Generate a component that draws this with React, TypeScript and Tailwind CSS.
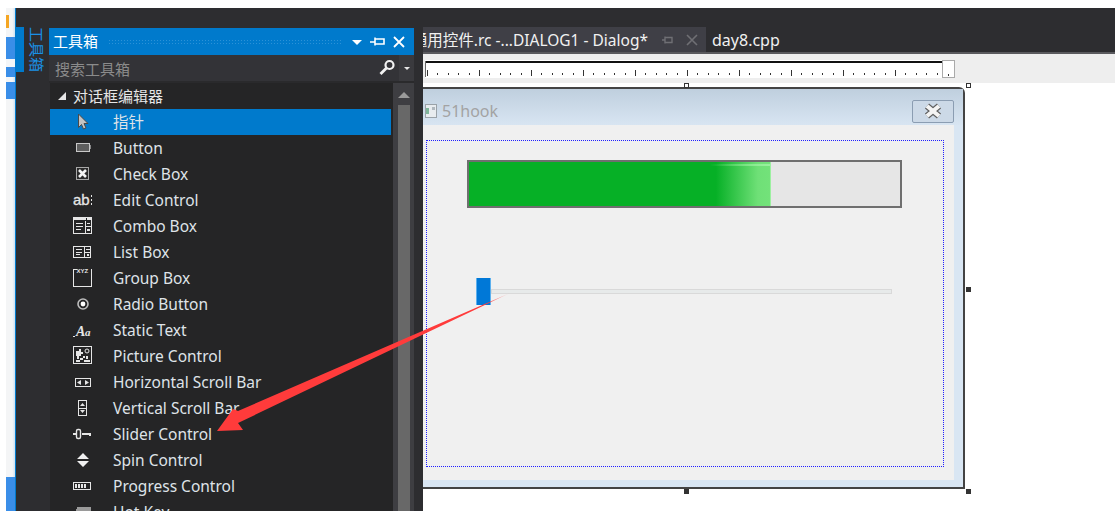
import type { ReactNode } from "react";

const FONT = "font-['Noto_Sans','Noto_Sans_CJK_SC',sans-serif]";

function Ic({ children }: { children: ReactNode }) {
  return (
    <svg width="20" height="20" viewBox="0 0 20 20" shapeRendering="crispEdges" className="shrink-0">
      {children}
    </svg>
  );
}

const W = "#e6e6e6";

const icons: Record<string, ReactNode> = {
  pointer: (
    <Ic>
      <path d="M5.5 2 L5.5 15.5 L8.5 12.5 L10.5 17 L13 16 L11 11.5 L15 11.5 Z" fill="#c4c4c4" stroke="#4a4a4a" strokeWidth="1" shapeRendering="auto" />
    </Ic>
  ),
  button: (
    <Ic>
      <rect x="3.5" y="5.5" width="13" height="8" fill="#5e5e5e" stroke="#c8c8c8" />
      <rect x="17" y="7" width="1" height="4" fill="#888" />
    </Ic>
  ),
  check: (
    <Ic>
      <rect x="3.5" y="3.5" width="12" height="12" fill="#2a2a2a" stroke="#a8a8a8" />
      <path d="M6 6 L13 13 M13 6 L6 13" stroke="#f4f4f4" strokeWidth="2.6" shapeRendering="auto" />
    </Ic>
  ),
  edit: (
    <Ic>
      <text x="0" y="15" fontSize="15" fontWeight="400" stroke={W} strokeWidth="0.3" fill={W} fontFamily="'Liberation Sans',sans-serif">ab</text>
      <rect x="18" y="5" width="1" height="2" fill={W} />
      <rect x="18" y="9" width="1" height="2" fill={W} />
      <rect x="18" y="13" width="1" height="2" fill={W} />
    </Ic>
  ),
  combo: (
    <Ic>
      <rect x="0.5" y="1.5" width="18" height="16" fill="none" stroke={W} />
      <rect x="1" y="2" width="12" height="2" fill={W} />
      <rect x="14" y="2" width="4" height="2" fill={W} />
      <rect x="3" y="7" width="7" height="1" fill={W} />
      <rect x="3" y="10" width="7" height="1" fill={W} />
      <rect x="3" y="13" width="5" height="1" fill={W} />
      <rect x="12" y="5" width="1" height="12" fill={W} />
      <rect x="13" y="10" width="5" height="1" fill={W} />
      <rect x="14" y="7" width="3" height="1" fill={W} />
      <rect x="14" y="13" width="3" height="2" fill={W} />
    </Ic>
  ),
  list: (
    <Ic>
      <rect x="0.5" y="4.5" width="17" height="11" fill="none" stroke={W} />
      <rect x="3" y="7" width="6" height="1" fill={W} />
      <rect x="3" y="10" width="6" height="1" fill={W} />
      <rect x="3" y="12" width="4" height="1" fill={W} />
      <rect x="11" y="5" width="1" height="10" fill={W} />
      <rect x="13" y="7" width="4" height="1" fill={W} />
      <rect x="12" y="10" width="5" height="1" fill={W} />
      <rect x="14" y="12" width="2" height="2" fill={W} />
    </Ic>
  ),
  group: (
    <Ic>
      <path d="M3.5 1.5 H0.5 V18.5 H18.5 V1.5 H17.5" fill="none" stroke={W} />
      <text x="3.5" y="4.5" fontSize="6" fontWeight="700" fill={W} fontFamily="'Liberation Sans',sans-serif">XYZ</text>
    </Ic>
  ),
  radio: (
    <Ic>
      <circle cx="10" cy="10" r="5" fill="none" stroke="#bdbdbd" strokeWidth="1.6" shapeRendering="auto" />
      <circle cx="10" cy="10" r="2.4" fill="#fff" shapeRendering="auto" />
    </Ic>
  ),
  stat: (
    <Ic>
      <rect x="0" y="16" width="2" height="1" fill={W} />
      <text x="3" y="16" fontSize="14" fontStyle="italic" fontWeight="700" fill={W} fontFamily="'Liberation Serif',serif">A</text>
      <text x="12" y="16" fontSize="11" fontStyle="italic" fontWeight="700" fill={W} fontFamily="'Liberation Serif',serif">a</text>
    </Ic>
  ),
  picture: (
    <Ic>
      <rect x="0.5" y="0.5" width="18" height="17" fill="none" stroke={W} />
      <path d="M3 5h3v-2h2v3h2v2h-2v2h-2v3h-2v-3h-1zM7 12h3v2h-3zM3 14h4v2h-4zM11 14h6v2h-6zM13 10h2v3h-2zM10 10h2v2h-2z" fill={W} />
      <circle cx="14" cy="5" r="2" fill="none" stroke={W} shapeRendering="auto" />
    </Ic>
  ),
  hscroll: (
    <Ic>
      <rect x="2.5" y="6.5" width="15" height="8" fill="none" stroke={W} />
      <path d="M8 8 V13 L4 10.5 Z M12 8 V13 L16 10.5 Z" fill={W} shapeRendering="auto" />
      <rect x="9" y="7" width="2" height="7" fill="#252526" />
    </Ic>
  ),
  vscroll: (
    <Ic>
      <rect x="5.5" y="2.5" width="8" height="15" fill="none" stroke={W} />
      <path d="M7 8 H12 L9.5 5 Z M7 12 H12 L9.5 15 Z" fill={W} shapeRendering="auto" />
      <rect x="6" y="10" width="7" height="1" fill={W} />
    </Ic>
  ),
  slider: (
    <Ic>
      <rect x="0" y="9" width="3" height="2" fill={W} />
      <rect x="3.5" y="5.5" width="4" height="9" rx="1.5" fill="none" stroke={W} strokeWidth="1.4" shapeRendering="auto" />
      <rect x="9" y="9" width="9" height="2" fill={W} />
      <rect x="16" y="9" width="2" height="3" fill={W} />
    </Ic>
  ),
  spin: (
    <Ic>
      <path d="M4 9 H16 L10 3 Z M4 11 H16 L10 17 Z" fill="#f0f0f0" shapeRendering="auto" />
    </Ic>
  ),
  progress: (
    <Ic>
      <rect x="0.5" y="6.5" width="17" height="7" fill="none" stroke={W} />
      <rect x="2" y="8" width="2" height="4" fill={W} />
      <rect x="5" y="8" width="2" height="4" fill={W} />
      <rect x="8" y="8" width="2" height="4" fill={W} />
      <rect x="11" y="8" width="2" height="4" fill={W} />
    </Ic>
  ),
  hotkey: (
    <Ic>
      <path d="M4 5 H18 V15 H2 Z" fill="#9a9a9a" />
    </Ic>
  ),
};

const items = [
  ["button", "Button"],
  ["check", "Check Box"],
  ["edit", "Edit Control"],
  ["combo", "Combo Box"],
  ["list", "List Box"],
  ["group", "Group Box"],
  ["radio", "Radio Button"],
  ["stat", "Static Text"],
  ["picture", "Picture Control"],
  ["hscroll", "Horizontal Scroll Bar"],
  ["vscroll", "Vertical Scroll Bar"],
  ["slider", "Slider Control"],
  ["spin", "Spin Control"],
  ["progress", "Progress Control"],
  ["hotkey", "Hot Key"],
];

function ToolRow({ icon, label, active }: { icon: string; label: string; active?: boolean }) {
  return (
    <div className={`h-[26px] shrink-0 flex items-center pl-[23px] mr-[2px] ${active ? "bg-[#007acc]" : ""}`}>
      {icons[icon]}
      <span className="ml-[20px] mt-[2px] text-[15.5px] text-[#dfe3e8] whitespace-nowrap leading-none">{label}</span>
    </div>
  );
}

function LeftStrip() {
  return (
    <div className="w-[10px] shrink-0 flex flex-col border-r border-[#007acc] bg-[linear-gradient(90deg,#f4f5f6_70%,#cde2f3)]">
      <div className="h-[7px]" />
      <div className="h-[13px] w-[3px] bg-[#f5a623]" />
      <div className="h-[9px]" />
      <div className="h-[22px] bg-[#3a8ee8]" />
      <div className="h-[8px] bg-[#f4f6f8]" />
      <div className="h-[10px] bg-[#3a8ee8]" />
      <div className="h-[5px]" />
      <div className="h-[17px] bg-[#3a8ee8]" />
      <div className="flex-1" />
      <div className="h-[34px] bg-[#3a8ee8]" />
    </div>
  );
}

function SideTab() {
  return (
    <div className="w-[33px] shrink-0 bg-[#2d2d30] flex items-start pt-[19px]">
      <div className="w-[8px] h-[45px] bg-[#007acc]" />
      <div className="ml-[5px] h-[45px] [writing-mode:vertical-rl] [text-orientation:sideways] whitespace-nowrap text-[15px] leading-[16px] text-[#1a90e6]">工具箱</div>
    </div>
  );
}

function Toolbox() {
  return (
    <div className="w-[365px] shrink-0 bg-[#2d2d30] pt-[20px] flex flex-col">
      <div className="h-[27px] shrink-0 bg-[#007acc] flex items-center pl-[4px] text-white">
        <span className="text-[15px] leading-none w-[55px] shrink-0">工具箱</span>
        <div className="w-[234px] h-[6px] shrink-0 bg-[radial-gradient(#2b92d8_0.8px,transparent_0.9px)] bg-[length:3px_3px]" />
        <svg width="72" height="20" viewBox="0 0 72 20" className="shrink-0">
          <path d="M10 8 H20 L15 13 Z" fill="#fff" />
          <path d="M28 10 H33 M33 5.5 V13.5 M33 7 H42 V12 H33" fill="none" stroke="#fff" strokeWidth="1.6" />
          <path d="M52 5 L62 15 M62 5 L52 15" stroke="#fff" strokeWidth="1.8" />
        </svg>
      </div>
      <div className="h-[28px] shrink-0 bg-[#333337] flex items-center pl-[6px] border-b-2 border-[#2a2a2c]">
        <span className="mt-[2px] text-[15px] leading-none text-[#8b8b8b] flex-1">搜索工具箱</span>
        <svg width="18" height="18" viewBox="0 0 18 18" className="shrink-0 mr-[3px]">
          <circle cx="11.5" cy="6" r="4" fill="none" stroke="#f2f2f2" strokeWidth="2.2" />
          <path d="M8.5 9 L2.5 15" stroke="#f2f2f2" strokeWidth="2.8" />
        </svg>
        <div className="w-[15px] h-full shrink-0 bg-[#3a3a3e] flex items-center justify-center">
          <div className="w-0 h-0 border-x-[3px] border-x-transparent border-t-[3px] border-t-[#e8e8e8]" />
        </div>
      </div>
      <div className="flex-1 min-h-0 flex ml-px">
        <div className="flex-1 min-w-0 bg-[#252526] flex flex-col overflow-hidden">
          <div className="h-[26px] shrink-0 flex items-center pl-[8px] text-[#e6e6e6]">
            <div className="w-0 h-0 border-l-[8px] border-l-transparent border-b-[8px] border-b-[#e6e6e6]" />
            <span className="ml-[7px] text-[15px] leading-none">对话框编辑器</span>
          </div>
          <ToolRow icon="pointer" label="指针" active />
          {items.map(([icon, label]) => (
            <ToolRow key={label} icon={icon} label={label} />
          ))}
        </div>
        <div className="w-[21px] shrink-0 bg-[#3e3e42] flex flex-col items-center">
          <div className="mt-[9px] w-0 h-0 border-x-[6px] border-x-transparent border-b-[6px] border-b-[#9a9a9a]" />
          <div className="mt-[7px] w-[12px] flex-1 bg-[#686868]" />
        </div>
      </div>
    </div>
  );
}

function Ruler() {
  const ticks = Array.from({ length: 50 }, (_, i) => i);
  return (
    <div className="h-[29px] shrink-0 bg-[#eeeeee] flex items-start pt-[6px] pl-[2px]">
      <svg width="517" height="18" viewBox="0 0 517 18" shapeRendering="crispEdges" className="shrink-0">
        <rect width="517" height="18" fill="#fff" />
        <rect y="1" width="517" height="1.5" fill="#111" />
        <rect y="1" width="1" height="16" fill="#666" />
        {ticks.map((i) => (
          <rect key={i} x={2 + i * 10.4} y={i % 5 === 0 ? 10 : 13} width="1" height={i % 5 === 0 ? 6 : 2} fill="#333" />
        ))}
      </svg>
      <div className="w-[13px] h-[18px] shrink-0 border border-[#aaaaaa] bg-white flex items-end justify-center pb-[1px]">
        <div className="w-px h-[2px] bg-[#333]" />
      </div>
    </div>
  );
}

function Handle({ className }: { className: string }) {
  return <div className={`absolute w-[5px] h-[5px] border border-[#333] ${className}`} />;
}

function DialogBody() {
  return (
    <div className="flex-1 min-h-0 mr-[9px] mb-[7px] bg-[#f0f0f0] pl-[5px] pr-[10px] pt-[15px] pb-[13px] flex flex-col">
      <div className="flex-1 border border-dotted border-[#1f1fff] pl-[40px] pr-[41px] pt-[19px]">
        <div className="h-[48px] border-2 border-[#6f6f6f] bg-[#e6e6e6] flex">
          <div className="relative w-[302px] h-full bg-[linear-gradient(90deg,#06b026_0%,#06b026_82%,#6fe077_96%,#73e27a_100%)] border-r border-[#9cf0a0]">
            <div className="absolute right-0 top-[2px] w-[60px] h-[2px] bg-[linear-gradient(90deg,transparent,#9af09f)]" />
          </div>
        </div>
        <div className="mt-[70px] ml-[9px] flex items-center">
          <div className="w-[15px] h-[27px] bg-[#0078d7] border-x border-[#5cb0ee] shrink-0" />
          <div className="w-[401px] h-[5px] bg-[#e7eaea] border border-[#d9d9d9]" />
        </div>
      </div>
    </div>
  );
}

function Canvas() {
  return (
    <div className="flex-1 min-h-0 bg-white relative overflow-hidden">
      <div className="ml-[-4px] mt-[4px] w-[546px] h-[402px] border-2 border-[#444] rounded-tr-[6px] bg-[#d9e6f3] flex flex-col">
        <div className="h-[36px] shrink-0 bg-[linear-gradient(180deg,#bfcfde,#d8e5f2)] flex items-center pl-[4px] pr-[9px] pt-[8px]">
          <svg width="12" height="14" viewBox="0 0 12 14" className="shrink-0">
            <rect x="0.5" y="0.5" width="11" height="13" fill="#e8ecef" stroke="#9aa2a8" />
            <rect x="1" y="4" width="3" height="6" fill="#7fb59a" />
            <rect x="7" y="3" width="3" height="3" fill="#b0b8be" />
          </svg>
          <span className="ml-[5px] text-[16px] leading-none text-[#a3a3a3] flex-1">51hook</span>
          <div className="w-[42px] h-[23px] border border-[#8b9db2] rounded-[2px] bg-[#ccd9e7] flex items-center justify-center">
            <svg width="22" height="18" viewBox="0 0 22 18">
              <path d="M5 4 L17 14 M17 4 L5 14" stroke="#5f5f5f" strokeWidth="6.4" />
              <path d="M5 4 L17 14 M17 4 L5 14" stroke="#f4f4f4" strokeWidth="4.2" />
            </svg>
          </div>
        </div>
        <DialogBody />
      </div>
      <Handle className="left-[261px] top-[0px] bg-white" />
      <Handle className="left-[543px] top-[0px] bg-white" />
      <Handle className="left-[543px] top-[204px] bg-[#333]" />
      <Handle className="left-[543px] top-[406px] bg-[#333]" />
      <Handle className="left-[261px] top-[406px] bg-[#333]" />
    </div>
  );
}

function MainArea() {
  return (
    <div className="flex-1 min-w-0 flex flex-col">
      <div className="h-[44px] shrink-0 bg-[#2d2d30] flex items-end">
        <div className="w-[283px] h-[25px] shrink-0 bg-[#3f3f46] overflow-hidden flex items-center justify-end text-[15.5px] leading-none text-[#f1f1f1]">
          <span className="mt-[2px] whitespace-nowrap">通用控件.rc -...DIALOG1 - Dialog*</span>
          <svg width="58" height="16" viewBox="0 0 58 16" className="shrink-0">
            <path d="M14 8 H17 M17 4.5 V11.5 M17 5.5 H24 V10.5 H17" fill="none" stroke="#6f6f74" strokeWidth="1.4" />
            <path d="M39 3 L49 13 M49 3 L39 13" stroke="#6f6f74" strokeWidth="1.6" />
          </svg>
        </div>
        <div className="h-[25px] flex items-center pl-[6px] text-[16px] leading-none text-[#f1f1f1]">day8.cpp</div>
      </div>
      <div className="h-[2px] shrink-0 bg-[#5a5a5e]" />
      <Ruler />
      <Canvas />
    </div>
  );
}

export default function App() {
  return (
    <div className={`w-[1115px] h-[511px] bg-white overflow-hidden relative flex flex-col ${FONT}`}>
      <div className="h-[8px] shrink-0 bg-white" />
      <div className="flex-1 min-h-0 flex">
        <div className="w-[6px] shrink-0 bg-white" />
        <LeftStrip />
        <SideTab />
        <Toolbox />
        <div className="w-[9px] shrink-0 bg-[#2d2d30]" />
        <MainArea />
      </div>
      <svg width="1115" height="511" viewBox="0 0 1115 511" className="absolute inset-0 pointer-events-none">
        <defs>
          <linearGradient id="tail" x1="510" y1="293" x2="485" y2="304" gradientUnits="userSpaceOnUse">
            <stop offset="0" stopColor="#ff3b3b" stopOpacity="0.1" />
            <stop offset="1" stopColor="#ff3b3b" />
          </linearGradient>
        </defs>
        <path d="M510 293 L238 411 L233 409 L217 431 L243 430 L238 423 Z" fill="url(#tail)" />
      </svg>
    </div>
  );
}
